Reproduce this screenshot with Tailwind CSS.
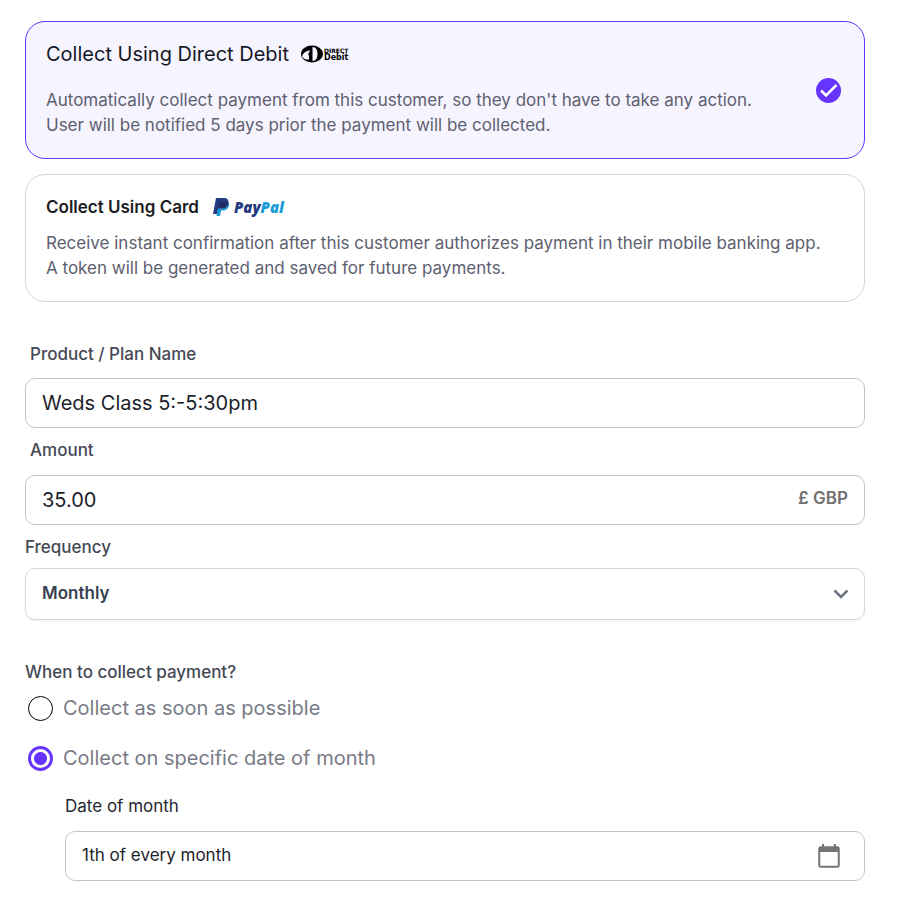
<!DOCTYPE html>
<html lang="en">
  <head>
    <meta charset="UTF-8" />
    <meta name="viewport" content="width=device-width, initial-scale=1.0" />
    <title>Collect payment</title>
    <script src="https://cdn.jsdelivr.net/npm/@tailwindcss/browser@4"></script>
  </head>

  <body class="bg-white font-['Inter',sans-serif] text-[17px] leading-6">
    <form class="pt-[21px] pb-5 pl-[25px] pr-[39px]" id="payment-form">
      <!-- collection methods -->
      <div class="flex flex-col gap-[15px]">
        <button
          type="button"
          aria-pressed="true"
          class="flex w-full items-center justify-between rounded-[20px] border border-[#6633ff] bg-[#f6f4ff] p-5 text-left"
        >
          <span class="block">
            <span class="flex items-center gap-3 text-xl leading-6 text-[#151826]">
              Collect Using Direct Debit
              <svg class="h-[18px] w-[52px] overflow-visible" viewBox="0 0 52 18" aria-label="Direct Debit">
                <ellipse cx="11" cy="9" rx="11" ry="8.5" fill="#000" />
                <path d="M1 11.500C2 8 5.500 5.500 9 5.500L7 9.500l1 1V14.500C5 14.500 2 14 1 11.500Z" fill="#f6f4ff" />
                <path d="M11.500 2C15 2 16.500 5 16.500 9s-1.500 7-5 7Z" fill="#f6f4ff" />
                <text x="23" y="8" class="font-['DejaVu_Sans',sans-serif] text-[6px] font-bold">DIRECT</text>
                <text x="23" y="15" class="font-['DejaVu_Sans',sans-serif] text-[8px] font-bold">Debit</text>
              </svg>
            </span>
            <span class="mt-[22px] block leading-[25px] text-[#5d6070]">
              Automatically collect payment from this customer, so they don't have to take any action.<br />
              User will be notified 5 days prior the payment will be collected.
            </span>
          </span>
          <svg class="mr-[3px] size-[25px] shrink-0" viewBox="0 0 25 25" fill="none">
            <circle cx="12.500" cy="12.500" r="12.500" fill="#6633ff" />
            <path d="M5 12.500l5 5L20.500 7" stroke="#fff" stroke-width="2.500" />
          </svg>
        </button>

        <button
          type="button"
          aria-pressed="false"
          class="block w-full rounded-[20px] border border-[#d4d4d6] bg-white p-5 text-left"
        >
          <span class="flex items-center gap-3.5 font-semibold text-[#1c1c1e]">
            Collect Using Card
            <svg class="h-5 w-[78px] overflow-visible" viewBox="0 0 78 20" aria-label="PayPal">
              <path d="M3 1h7.500c4 0 5.500 2 4.800 5.500C14.600 10 12 11.500 9 11.500H6L5 17H0Z" fill="#253b80" />
              <path d="M15.500 5c.7 1 .8 2 .5 3.500-.7 3.500-3 5-6.500 5H8L7 19H3.500l1.300-7.500H9c3.500 0 6-2 6.500-6.500Z" fill="#179bd7" />
              <path d="M6.500 5h7c1 0 1.500.2 2 .5-.6 4-3 6-6.500 6H5.300Z" fill="#222d65" />
              <text x="21" y="16" class="font-['Open_Sans',sans-serif] text-[15px] font-extrabold italic" fill="#253b80">Pay<tspan fill="#179bd7">Pal</tspan></text>
            </svg>
          </span>
          <span class="mt-3 block leading-[25px] text-[#5d6070]">
            Receive instant confirmation after this customer authorizes payment in their mobile banking app.<br />
            A token will be generated and saved for future payments.
          </span>
        </button>
      </div>

      <!-- plan details -->
      <div class="mt-10">
        <label for="plan" class="mb-3 block pl-[5px] font-medium text-[#454955]">Product / Plan Name</label>
        <input
          type="text"
          id="plan"
          name="plan"
          value="Weds Class 5:-5:30pm"
          class="block h-[50px] w-full rounded-[10px] border border-[#c4c4c4] px-4 text-xl text-[#1c1e2b]"
        />
      </div>

      <div class="mt-2.5">
        <label for="amount" class="mb-[13px] block pl-[5px] font-medium text-[#454955]">Amount</label>
        <div class="flex h-[50px] items-center rounded-[10px] border border-[#c4c4c4] px-4">
          <input
            type="text"
            id="amount"
            name="amount"
            value="35.00"
            class="min-w-0 flex-1 text-xl text-[#1c1e2b] outline-none"
          />
          <span class="pb-1 font-semibold text-[#707070]">£ GBP</span>
        </div>
      </div>

      <div class="mt-2.5">
        <label for="frequency" class="mb-[9px] block font-medium text-[#454955]">Frequency</label>
        <div class="relative">
          <select
            id="frequency"
            name="frequency"
            class="block h-[52px] w-full appearance-none rounded-[10px] border border-[#d4d6da] bg-white px-4 pb-0.5 font-semibold text-[#374151] shadow-xs"
          >
            <option>Monthly</option>
          </select>
          <svg
            class="pointer-events-none absolute top-[21px] right-4 h-[11px] w-4"
            viewBox="0 0 16 11"
            fill="none"
            stroke="#6b7280"
            stroke-width="2.500"
          >
            <path d="M1.500 1.500 8 8l6.500-6.500" />
          </svg>
        </div>
      </div>

      <!-- collection date -->
      <fieldset class="mt-10">
        <legend class="font-medium text-[#454955]">When to collect payment?</legend>
        <div class="mt-[11px] flex flex-col gap-6 pl-[3px] text-xl leading-[26px] text-[#787b86]">
          <label class="flex items-center gap-2.5">
            <input
              type="radio"
              name="collect"
              value="asap"
              class="size-[25px] appearance-none rounded-full border border-black"
            />
            Collect as soon as possible
          </label>
          <label class="flex items-center gap-2.5">
            <input
              type="radio"
              name="collect"
              value="date"
              checked
              class="size-[25px] appearance-none rounded-full border-3 border-[#6633ff] bg-[radial-gradient(circle,#6633ff_6px,white_7px)]"
            />
            Collect on specific date of month
          </label>
        </div>
      </fieldset>

      <div class="mt-[23px] pl-10">
        <label for="day" class="mb-[13px] block text-[#24262f]">Date of month</label>
        <div class="flex h-[50px] items-center rounded-[10px] border border-[#c4c4c4] pr-6 pl-4">
          <input
            type="text"
            id="day"
            name="day"
            value="1th of every month"
            class="min-w-0 flex-1 pb-0.5 text-[#1c1e2b] outline-none"
          />
          <svg class="h-6 w-[22px]" viewBox="0 0 22 24" fill="none">
            <path d="M5 0v4M17 0v4" stroke="#757575" stroke-width="2" />
            <rect x="1.250" y="3.250" width="19.500" height="19.500" rx="1.500" stroke="#757575" stroke-width="2" />
            <path d="M1 3h20v5H1z" fill="#757575" />
          </svg>
        </div>
      </div>
    </form>
  </body>
</html>
